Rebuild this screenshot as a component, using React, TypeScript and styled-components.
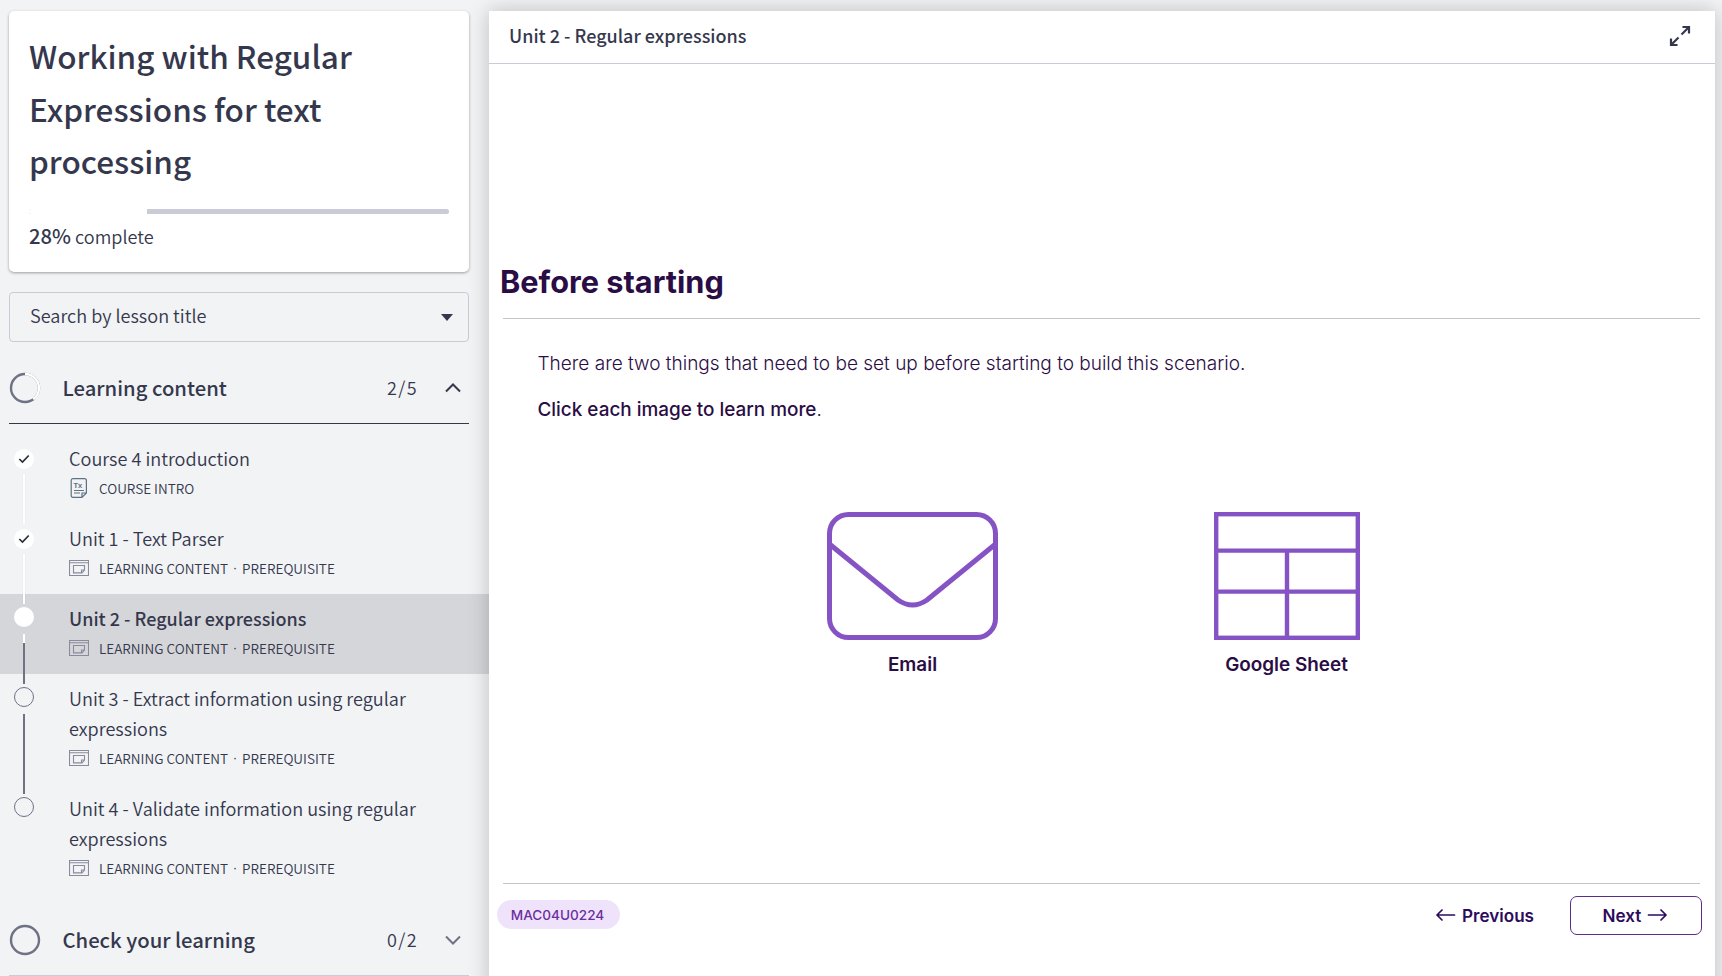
import React from 'react';
import styled, { createGlobalStyle, css } from 'styled-components';

const ink = '#35384d';
const slate = '#6f7285';
const violet = '#8653c5';
const plum = '#2a0d45';
const sans = '"Noto Sans CJK SC", "Noto Sans", sans-serif';
const inter = 'Inter, "Open Sans", sans-serif';

const GlobalStyle = createGlobalStyle`
  * { box-sizing: border-box; }
  html, body { margin: 0; height: 100%; overflow: hidden; background: #f1f3f5; }
  h1, h2, p { margin: 0; }
  button { font: inherit; color: inherit; background: none; border: 0; padding: 0; }
  svg { display: block; flex: none; }
`;

const Page = styled.div`
  display: grid;
  grid-template-columns: 489px 1226px;
  height: 976px;
  overflow: hidden;
  color: ${ink};
  font-family: ${sans};
  font-weight: 350;
`;

const Sidebar = styled.aside`
  display: flex;
  flex-direction: column;
  padding-top: 11px;
`;

const CourseCard = styled.section`
  height: 261px;
  margin: 0 20px 0 9px;
  padding: 18px 20px 0;
  flex: none;
  background: #fff;
  border-radius: 5px;
  box-shadow: 0 1px 3px rgba(0, 0, 0, 0.36);
`;

const CourseTitle = styled.h1`
  font-size: 31.5px;
  font-weight: 500;
  line-height: 52.5px;
  white-space: nowrap;
`;

const Progress = styled.div`
  height: 5px;
  margin-top: 22px;
  border-radius: 3px;
  background: #c9cbd6;
  overflow: hidden;
`;

const ProgressFill = styled.div`
  height: 100%;
  background: #fff;
`;

const ProgressText = styled.p`
  margin-top: 7px;
  font-size: 18.1px;
  line-height: 30px;
  b { font-size: 20.2px; font-weight: 500; }
`;

const SearchBox = styled.button`
  display: flex;
  align-items: center;
  justify-content: space-between;
  flex: none;
  height: 50px;
  margin: 20px 20px 0 9px;
  padding: 0 15px 4px 20px;
  border: 1px solid #c9cbd9;
  border-radius: 4px;
  font-size: 18.1px;
  svg { margin-top: 5px; }
`;

const SectionHeader = styled.div<{ $open?: boolean }>`
  display: flex;
  align-items: center;
  flex: none;
  height: 72px;
  margin: 0 20px 0 9px;
  padding-right: 8px;
  border-bottom: 1px solid ${(p) => (p.$open ? ink : '#c9cbd9')};
`;

const SectionTitle = styled.h2`
  flex: 1;
  margin-left: 21.5px;
  font-size: 20.25px;
  font-weight: 500;
  line-height: 30px;
`;

const Count = styled.span`
  width: 30px;
  margin-right: 28px;
  padding-bottom: 2px;
  font-size: 18px;
  letter-spacing: 1.4px;
  white-space: nowrap;
`;

const SectionGap = styled.div<{ $h: number }>`
  flex: none;
  height: ${(p) => p.$h}px;
`;

const Lesson = styled.div<{ $active?: boolean }>`
  display: grid;
  grid-template-columns: 69px 1fr;
  flex: none;
  background: ${(p) => (p.$active ? '#d5d6da' : 'transparent')};
`;

const Rail = styled.div<{ $done?: boolean }>`
  display: flex;
  flex-direction: column;
  align-items: center;
  width: 48px;
  padding-top: ${(p) => (p.$done ? 15 : 13)}px;
`;

const Dot = styled.div<{ $filled?: boolean }>`
  display: grid;
  place-items: center;
  flex: none;
  width: 20px;
  height: 20px;
  border-radius: 50%;
  ${(p) => (p.$filled ? css`background: #fff;` : css`border: 1px solid ${slate};`)}
`;

const Track = styled.div<{ $kind: 'done' | 'partial' | 'todo' }>`
  flex: 1;
  width: 2px;
  position: relative;
  z-index: 1;
  margin: ${(p) => (p.$kind === 'done' ? '5px 0 -10px' : '7px 0 -10px')};
  ${(p) =>
    p.$kind === 'done'
      ? css`background: #fff; box-shadow: 0 0 1px rgba(0, 0, 0, 0.2);`
      : p.$kind === 'partial'
        ? css`background: linear-gradient(#fff 9px, ${slate} 9px);`
        : css`background: ${slate};`}
`;

const LessonBody = styled.div`
  padding: 9px 60px 11px 0;
`;

const LessonTitle = styled.div<{ $active?: boolean }>`
  font-size: ${(p) => (p.$active ? 18 : 18.13)}px;
  line-height: 30px;
  font-weight: ${(p) => (p.$active ? 500 : 350)};
  color: ${ink};
  white-space: nowrap;
`;

const LessonMeta = styled.div`
  display: flex;
  align-items: center;
  height: 30px;
  font-size: 13.55px;
  line-height: 30px;
  white-space: nowrap;
  color: ${ink};
`;

const MetaIcon = styled.span`
  width: 30px;
`;

const Separator = styled.span`
  width: 14px;
  font-family: "Liberation Sans", sans-serif;
  text-align: center;
`;

const Panel = styled.main`
  display: flex;
  flex-direction: column;
  position: relative;
  z-index: 2;
  margin-top: 11px;
  height: 985px;
  background: #fff;
  box-shadow: 0 0 20px rgba(0, 0, 0, 0.22);
  color: ${plum};
`;

const PanelHeader = styled.header`
  display: flex;
  align-items: center;
  justify-content: space-between;
  height: 53px;
  padding: 0 24px 4px 20px;
  border-bottom: 1px solid #c9cbd9;
  color: ${ink};
  font-size: 18px;
  font-weight: 500;
  svg { margin-top: 1px; }
`;

const Slide = styled.section`
  display: flex;
  flex-direction: column;
  height: 820px;
  margin: 0 15px 0 14px;
  padding-top: 190px;
  border-bottom: 1px solid #c9c3c9;
  font-family: ${inter};
`;

const SlideTitle = styled.h2`
  height: 64px;
  margin-left: -3px;
  font-size: 30.7px;
  font-weight: 700;
  line-height: 56px;
`;

const Rule = styled.div`
  height: 1px;
  background: #c9c3c9;
`;

const Lead = styled.p`
  margin: 30px 0 0 34.5px;
  font-size: 19.02px;
  font-weight: 300;
  line-height: 30px;
  white-space: nowrap;
`;

const Prompt = styled.p`
  margin: 16px 0 0 34.5px;
  font-size: 18.9px;
  font-weight: 500;
  line-height: 30px;
  span { font-weight: 300; }
`;

const Choices = styled.div`
  display: grid;
  grid-template-columns: 171px 146px;
  column-gap: 215.5px;
  margin: 87px 0 0 324px;
`;

const Choice = styled.button`
  display: flex;
  flex-direction: column;
  align-items: center;
  gap: 10px;
  font-size: 18.9px;
  font-weight: 600;
  line-height: 30px;
  white-space: nowrap;
`;

const Footer = styled.footer`
  display: flex;
  align-items: flex-start;
  padding: 12px 13px 0 8px;
  font-family: ${inter};
`;

const CodePill = styled.span`
  width: 123px;
  height: 29px;
  margin: 4px auto 0 0;
  padding-right: 2px;
  border-radius: 15px;
  background: #efe3fb;
  color: #6b2fa0;
  font-size: 13.6px;
  font-weight: 500;
  line-height: 31px;
  text-align: center;
`;

const NavButton = styled.button<{ $outlined?: boolean }>`
  display: flex;
  align-items: center;
  justify-content: center;
  gap: 6px;
  height: 39px;
  padding-bottom: 1px;
  color: #2d0a5c;
  font-size: 17.1px;
  font-weight: 600;
  ${(p) =>
    p.$outlined
      ? css`width: 132px; margin-left: 36px; padding-right: 2px; border: 1px solid #5b2d87; border-radius: 7px;`
      : css``}
`;

const SheetIcon = () => (
  <svg width="146" height="128" viewBox="0 0 146 128" fill="none" stroke={violet} strokeWidth="4.4">
    <rect x="2.2" y="2.2" width="141.6" height="123.6" />
    <path d="M2 38.6H144M2 79.6H144M73 38.6V126" />
  </svg>
);

const EmailIcon = () => (
  <svg width="171" height="128" viewBox="0 0 171 128" fill="none" stroke={violet} strokeWidth="5">
    <rect x="2.5" y="2.5" width="166" height="123" rx="19" />
    <path d="M3 32.5L71 88Q85.500 98 100 88L168 32.500" />
  </svg>
);

const Arrow = ({ left }: { left?: boolean }) => (
  <svg width="20" height="14" viewBox="0 0 20 14" fill="none" stroke="#2d0a5c" strokeWidth="1.7" strokeLinecap="round" strokeLinejoin="round">
    <path d={left ? 'M18.500 7H1M6 2L1 7L6 12' : 'M1.500 7H19M14 2L19 7L14 12'} />
  </svg>
);

const ExpandIcon = () => (
  <svg width="22" height="22" viewBox="0 0 22 22" fill="none" stroke={ink} strokeWidth="2.2">
    <path d="M13.500 2H20V8.500M20 2L12.500 9.500M8.500 20H2V13.500M2 20L9.500 12.500" />
  </svg>
);

const Check = () => (
  <svg width="12" height="10" viewBox="0 0 12 10" fill="none" stroke="#2b2d3b" strokeWidth="1.7">
    <path d="M1.300 5L4.500 8L10.700 1.500" />
  </svg>
);

const Chevron = ({ up }: { up?: boolean }) => (
  <svg width="16" height="10" viewBox="0 0 16 10" fill="none" stroke={up ? ink : slate} strokeWidth="2">
    <path d={up ? 'M1 8.500L8 1.500L15 8.500' : 'M1 1.500L8 8.500L15 1.500'} />
  </svg>
);

const Ring = ({ value = 0 }: { value?: number }) => (
  <svg width="32" height="32" viewBox="0 0 32 32" fill="none" strokeWidth="2.400">
    <circle cx="16" cy="16" r="14" stroke={slate} />
    {value > 0 && (
      <circle cx="16" cy="16" r="14" stroke="#fff" strokeWidth="2.400" pathLength={100} strokeDasharray={`${value} 100`} transform="rotate(-90 16 16)" />
    )}
  </svg>
);

const IntroIcon = () => (
  <svg width="20" height="20" viewBox="0 0 20 20" fill="none" stroke="#5f7183" strokeWidth="1.200">
    <path d="M4 .6H15.500Q17.400 .6 17.400 2.500V15L13 19.400H4Q2.200 19.400 2.200 17.500V2.500Q2.200 .6 4 .6ZM13 19.400V15H17.400M5 12.500H15M5 15H11" />
    <text x="4.500" y="9.700" fill="#5f7183" stroke="none" fontFamily="Liberation Sans" fontWeight="700" fontSize="7.500">Tx</text>
  </svg>
);

const ContentIcon = () => (
  <svg width="20" height="16" viewBox="0 0 20 16" fill="none" stroke="#888b9b" strokeWidth="1.100">
    <path d="M.5 .5H19.500V15.500H.5ZM.5 2.800H19.500M4.500 5.500H15.500V10L13 12.900H4.500ZM12.500 12.900V10H15.500" />
  </svg>
);

type Item = {
  title: React.ReactNode;
  status: 'done' | 'partial' | 'todo';
  intro?: boolean;
  last?: boolean;
};

const lessons: Item[] = [
  { title: 'Course 4 introduction', status: 'done', intro: true },
  { title: 'Unit 1 - Text Parser', status: 'done' },
  { title: 'Unit 2 - Regular expressions', status: 'partial' },
  { title: <>Unit 3 - Extract information using regular<br />expressions</>, status: 'todo' },
  { title: <>Unit 4 - Validate information using regular<br />expressions</>, status: 'todo', last: true },
];

const LessonRow = ({ title, status, intro, last }: Item) => (
  <Lesson $active={status === 'partial'}>
    <Rail $done={status === 'done'}>
      <Dot $filled={status !== 'todo'}>{status === 'done' && <Check />}</Dot>
      {!last && <Track $kind={status} />}
    </Rail>
    <LessonBody>
      <LessonTitle $active={status === 'partial'}>{title}</LessonTitle>
      <LessonMeta>
        <MetaIcon>{intro ? <IntroIcon /> : <ContentIcon />}</MetaIcon>
        {intro ? <span>COURSE INTRO</span> : <><span>LEARNING CONTENT</span><Separator>·</Separator><span>PREREQUISITE</span></>}
      </LessonMeta>
    </LessonBody>
  </Lesson>
);

export default function App() {
  return (
    <Page>
      <GlobalStyle />
      <Sidebar>
        <CourseCard>
          <CourseTitle>Working with Regular<br />Expressions for text<br />processing</CourseTitle>
          <Progress><ProgressFill style={{ width: '28%' }} /></Progress>
          <ProgressText><b>28%</b> complete</ProgressText>
        </CourseCard>
        <SearchBox>
          <span>Search by lesson title</span>
          <svg width="12" height="7" viewBox="0 0 12 7" fill={ink}><path d="M0 0H12L6 7Z" /></svg>
        </SearchBox>
        <SectionGap $h={10} />
        <SectionHeader $open>
          <Ring value={40} />
          <SectionTitle>Learning content</SectionTitle>
          <Count>2/5</Count>
          <Chevron up />
        </SectionHeader>
        <SectionGap $h={10} />
        {lessons.map((lesson, i) => <LessonRow key={i} {...lesson} />)}
        <SectionGap $h={10} />
        <SectionHeader>
          <Ring />
          <SectionTitle>Check your learning</SectionTitle>
          <Count>0/2</Count>
          <Chevron />
        </SectionHeader>
      </Sidebar>
      <Panel>
        <PanelHeader>
          <span>Unit 2 - Regular expressions</span>
          <ExpandIcon />
        </PanelHeader>
        <Slide>
          <SlideTitle>Before starting</SlideTitle>
          <Rule />
          <Lead>There are two things that need to be set up before starting to build this scenario.</Lead>
          <Prompt>Click each image to learn more<span>.</span></Prompt>
          <Choices>
            <Choice><EmailIcon />Email</Choice>
            <Choice><SheetIcon />Google Sheet</Choice>
          </Choices>
        </Slide>
        <Footer>
          <CodePill>MAC04U0224</CodePill>
          <NavButton><Arrow left />Previous</NavButton>
          <NavButton $outlined>Next<Arrow /></NavButton>
        </Footer>
      </Panel>
    </Page>
  );
}
